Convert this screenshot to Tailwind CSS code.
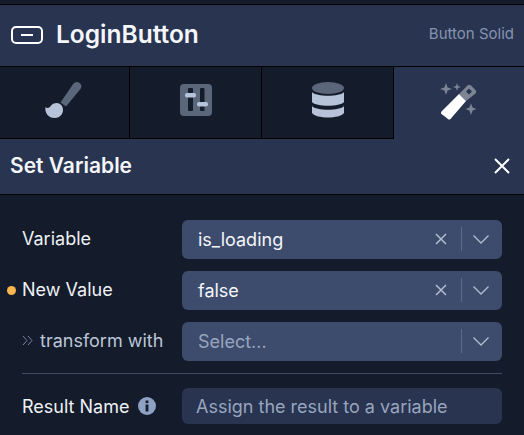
<!DOCTYPE html>
<html lang="en">
<head>
    <meta charset="UTF-8">
    <meta name="viewport" content="width=device-width, initial-scale=1.0">
    <title>LoginButton</title>
    <script src="https://cdn.jsdelivr.net/npm/@tailwindcss/browser@4"></script>
</head>
<body class="bg-[#141b2a] h-[435px] overflow-hidden font-['Inter',sans-serif]">
    <div class="h-[5px] border-b border-black"></div>

    <div class="h-[62px] bg-[#283450] border-b border-black flex items-center pl-[11px] pr-[10px] pb-[2px]">
        <svg width="32" height="18" viewBox="0 0 32 18" fill="none" stroke="white" stroke-width="2">
            <rect x="1" y="1" width="30" height="16" rx="4"/>
            <line x1="10" y1="9" x2="22" y2="9"/>
        </svg>
        <span class="ml-[13px] text-[24.5px] font-semibold text-[#f4f6fa] leading-none">LoginButton</span>
        <span class="ml-auto text-[15px] text-[#8593b0]">Button Solid</span>
    </div>

    <div class="h-[72px] flex">
        <div class="w-[130px] border-r border-b border-black pb-[5px] flex items-center justify-center">
            <svg class="overflow-visible" width="38" height="38" viewBox="1.5 -2 38 38">
                <path d="M29 0.5 a4.5 4.5 0 0 1 7 5.6 L21.5 23.5 L16 19.5 Z" fill="#5a6679"/>
                <path d="M1 24 C3 26 5 25 7 22 C10 19 16 19 18 24 C20 30 16 35 10 35 C4 35 0 30 1 24 Z" fill="#b6c3d8"/>
            </svg>
        </div>
        <div class="w-[132px] border-r border-b border-black pb-[5px] flex items-center justify-center">
            <svg width="32" height="32" viewBox="0 0 32 32">
                <rect width="32" height="32" rx="4" fill="#5a6679"/>
                <rect x="8" y="4" width="5" height="23" rx="1" fill="#141b2a"/>
                <rect x="20" y="4" width="4.5" height="23" rx="1" fill="#141b2a"/>
                <rect x="5" y="9" width="11" height="4.5" rx="2" fill="#b6c3d8"/>
                <rect x="17" y="18" width="11" height="4.5" rx="2" fill="#b6c3d8"/>
            </svg>
        </div>
        <div class="w-[132px] border-r border-b border-black pb-[5px] flex items-center justify-center">
            <svg width="32" height="36" viewBox="0 0 32 36">
                <ellipse cx="16" cy="6" rx="16" ry="6" fill="#5a6679"/>
                <path d="M0 10 C4 15 28 15 32 10 V20 C28 25 4 25 0 20 Z" fill="#b6c3d8"/>
                <path d="M0 24 C4 29 28 29 32 24 V31 C28 37 4 37 0 31 Z" fill="#b6c3d8"/>
            </svg>
        </div>
        <div class="flex-1 bg-[#283450] pb-[5px] flex items-center justify-center">
            <svg width="38" height="38" viewBox="0 -2 38 38">
                <path d="M19 10 L27.5 1.5 a2.5 2.5 0 0 1 3.5 0 L35.5 6 a2.5 2.5 0 0 1 0 3.5 L26 17 Z M29 4.5 L26 7.5 L29 10.5 L32 7.5 Z" fill-rule="evenodd" fill="#7d8494"/>
                <path d="M19 10 L26 17 L10.5 35 a2 2 0 0 1 -2.5 0 L1.5 30 a2 2 0 0 1 0 -2.5 Z" fill="white"/>
                <path d="M6 -1 L7.6 3.4 L12 5 L7.6 6.6 L6 11 L4.4 6.6 L0 5 L4.4 3.4 Z" fill="#7d8494"/>
                <path d="M17 -1 L18 2 L21 3 L18 4 L17 7 L16 4 L13 3 L16 2 Z" fill="#7d8494"/>
                <path d="M31 19.5 L32.6 23.4 L36.5 25 L32.6 26.6 L31 31 L29.4 26.6 L25.5 25 L29.4 23.4 Z" fill="#7d8494"/>
            </svg>
        </div>
    </div>

    <div class="h-[56px] bg-[#283450] border-b border-black flex items-center justify-between pl-[10px] pr-[14px] pb-[1px]">
        <span class="text-[21px] font-semibold text-[#f4f6fa]">Set Variable</span>
        <svg width="16" height="16" viewBox="0 0 16 16" stroke="white" stroke-width="2"><path d="M1 1 L15 15 M15 1 L1 15"/></svg>
    </div>

    <div class="pl-[22px] pr-[22px] pt-[25px]">
        <div class="flex items-center h-[39px]">
            <span class="w-[160px] pb-[2px] text-[18px] text-[#eef1f6]">Variable</span>
            <div class="flex-1 h-full pb-[1px] bg-[#3d4c6d] rounded-md flex items-center pl-4 text-[18px] text-[#f4f6fa]">
                is_loading
                <svg class="ml-auto" width="12" height="12" viewBox="0 0 12 12" stroke="#b4bdcf" stroke-width="1.5"><path d="M1 1 L11 11 M11 1 L1 11"/></svg>
                <div class="w-[1.5px] h-6 bg-[#5a6a8c] ml-[13.5px]"></div>
                <svg class="ml-[11px] mr-[13px]" width="16" height="9" viewBox="0 0 16 9" fill="none" stroke="#b4bdcf" stroke-width="1.3"><path d="M0.5 0.5 L8 8 L15.5 0.5"/></svg>
            </div>
        </div>
        <div class="flex items-center h-[39px] mt-3 relative">
            <span class="absolute left-[-15px] w-[9px] h-[9px] rounded-full bg-[#fbb550]"></span>
            <span class="w-[160px] pb-[2px] text-[18px] text-[#eef1f6]">New Value</span>
            <div class="flex-1 h-full pb-[1px] bg-[#3d4c6d] rounded-md flex items-center pl-4 text-[18px] text-[#f4f6fa]">
                false
                <svg class="ml-auto" width="12" height="12" viewBox="0 0 12 12" stroke="#b4bdcf" stroke-width="1.5"><path d="M1 1 L11 11 M11 1 L1 11"/></svg>
                <div class="w-[1.5px] h-6 bg-[#5a6a8c] ml-[13.5px]"></div>
                <svg class="ml-[11px] mr-[13px]" width="16" height="9" viewBox="0 0 16 9" fill="none" stroke="#b4bdcf" stroke-width="1.3"><path d="M0.5 0.5 L8 8 L15.5 0.5"/></svg>
            </div>
        </div>
        <div class="flex items-center h-[39px] mt-3">
            <div class="w-[160px] pb-[2px] flex items-center text-[18px] text-[#bcc6d8]">
                <svg width="11" height="11" viewBox="0 0 11 11" fill="none" stroke="#7385a8" stroke-width="1"><path d="M1 1 L5 5.5 L1 10 M6 1 L10 5.5 L6 10"/></svg>
                <span class="ml-[7px]">transform with</span>
            </div>
            <div class="flex-1 h-full pb-[1px] bg-[#3d4c6d] rounded-md flex items-center pl-4 text-[18px] text-[#98a5bf]">
                Select...
                <div class="w-[1.5px] h-6 bg-[#5a6a8c] ml-auto"></div>
                <svg class="ml-[11px] mr-[13px]" width="16" height="9" viewBox="0 0 16 9" fill="none" stroke="#b4bdcf" stroke-width="1.3"><path d="M0.5 0.5 L8 8 L15.5 0.5"/></svg>
            </div>
        </div>
        <div class="h-px bg-[#3d4a63] mt-3"></div>
        <div class="flex items-center h-[36px] mt-[14px]">
            <div class="w-[160px] flex items-center text-[18px] text-[#eef1f6]">
                Result Name
                <svg class="ml-[9px]" width="18" height="18" viewBox="0 0 18 18">
                    <circle cx="9" cy="9" r="9" fill="#8ea0c4"/>
                    <rect x="7.6" y="7.5" width="2.8" height="7" fill="#141b2a"/>
                    <rect x="7.6" y="3.5" width="2.8" height="2.6" fill="#141b2a"/>
                </svg>
            </div>
            <div class="flex-1 h-full bg-[#283450] rounded-md flex items-center pl-[14px] text-[18px] text-[#98a5bf]">Assign the result to a variable</div>
        </div>
    </div>
</body>
</html>
